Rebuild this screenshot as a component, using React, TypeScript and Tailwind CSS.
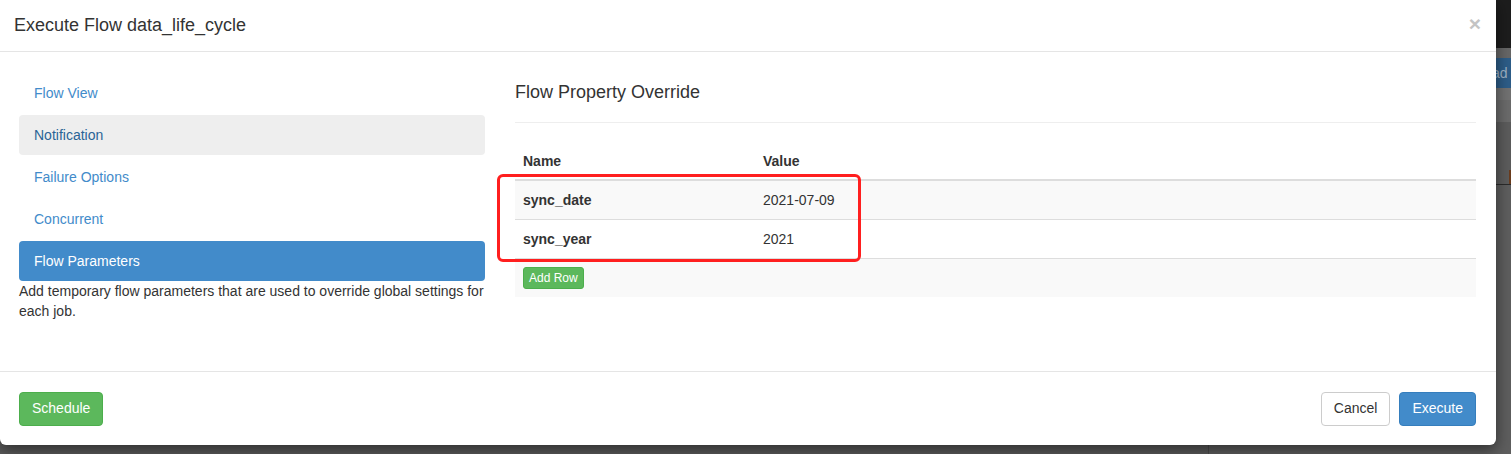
import React from "react";

const navItems = [
  { label: "Flow View", state: "link" },
  { label: "Notification", state: "hover" },
  { label: "Failure Options", state: "link" },
  { label: "Concurrent", state: "link" },
  { label: "Flow Parameters", state: "active" },
];

const params = [
  { name: "sync_date", value: "2021-07-09" },
  { name: "sync_year", value: "2021" },
];

function NavItem({ label, state }: { label: string; state: string }) {
  const tone =
    state === "active"
      ? "bg-[#428bca] text-white"
      : state === "hover"
        ? "bg-[#eeeeee] text-[#2a6496]"
        : "text-[#428bca]";
  return (
    <div className={`flex h-[40px] items-center rounded-[4px] px-[15px] text-[14px] ${tone}`}>{label}</div>
  );
}

function PageStrip() {
  // what shows of the page behind the dimmed backdrop
  return (
    <div className="flex w-[15px] shrink-0 flex-col">
      <div className="h-[48px] bg-[#1d1d1d]" />
      <div className="h-[10px] bg-[#676767]" />
      <div className="flex h-[30px] items-center overflow-hidden bg-[#2d5d88] text-[14px] leading-none text-[#9fb3c6]">
        <span className="-ml-[4px]">ad</span>
      </div>
      <div className="h-[12px] bg-[#727272]" />
      <div className="h-[22px] bg-[#6b6b6b]" />
      <div className="h-[48px] bg-[#5c5c5c]" />
      <div className="h-[14px] border-r-2 border-[#6b3c1e] bg-[#5c5c5c]" />
      <div className="h-[1px] bg-[#2b2b2b]" />
      <div className="flex-1 bg-[#5e5e5e]" />
    </div>
  );
}

export default function App() {
  return (
    <div
      className="flex h-[454px] w-[1511px] overflow-hidden bg-[#5c5c5c] text-[#333333]"
      style={{ fontFamily: '"Liberation Sans", Arial, sans-serif' }}
    >
      <div className="flex w-[1496px] shrink-0 flex-col">
        <div className="relative z-10 flex h-[445px] flex-col rounded-b-[6px] bg-white shadow-[0_5px_15px_rgba(0,0,0,0.5)]">
          {/* header */}
          <div className="flex h-[52px] items-center justify-between border-b border-[#e5e5e5] pl-[14px] pr-[15px]">
            <h4 className="text-[18px] leading-[21px] text-[#333333]">Execute Flow data_life_cycle</h4>
            <span className="-mt-[4px] text-[21px] font-bold leading-none text-[#c4c4c4]">×</span>
          </div>

          {/* body */}
          <div className="flex flex-1 gap-[30px] pl-[19px] pr-[20px] pt-[21px]">
            <div className="w-[466px] shrink-0">
              <div className="flex flex-col gap-[2px]">
                {navItems.map((n) => (
                  <NavItem key={n.label} label={n.label} state={n.state} />
                ))}
              </div>
              <p className="text-[14px] leading-[20px] text-[#333333]">
                Add temporary flow parameters that are used to override global settings for each job.
              </p>
            </div>

            <div className="relative flex-1">
              <h3 className="pt-[9px] text-[18px] leading-[20px] text-[#333333]">Flow Property Override</h3>
              <div className="mt-[20px] h-px bg-[#eeeeee]" />
              <div className="mt-[19px] text-[14px]">
                <div className="flex h-[39px] items-center border-b-2 border-[#dddddd] pt-[1px] font-bold">
                  <div className="w-[248px] pl-[8px]">Name</div>
                  <div>Value</div>
                </div>
                {params.map((p, i) => (
                  <div
                    key={p.name}
                    className={`flex items-center ${i === 0 ? "h-[38px] bg-[#f9f9f9]" : "h-[39px] border-t border-[#dddddd]"}`}
                  >
                    <div className="w-[248px] pl-[8px] font-bold">{p.name}</div>
                    <div>{p.value}</div>
                  </div>
                ))}
                <div className="flex h-[39px] items-center border-t border-[#dddddd] bg-[#f9f9f9] pl-[8px]">
                  <button className="flex h-[22px] items-center rounded-[3px] border border-[#4cae4c] bg-[#5cb85c] px-[5px] text-[12px] text-white">
                    Add Row
                  </button>
                </div>
              </div>

              {/* red annotation box */}
              <div className="pointer-events-none absolute left-[-18px] top-[101px] h-[88px] w-[364px] rounded-[6px] border-[3px] border-[#ff1f1f]" />
            </div>
          </div>

          {/* footer */}
          <div className="flex h-[74px] items-center justify-between border-t border-[#e5e5e5] pl-[19px] pr-[20px]">
            <button className="h-[34px] rounded-[4px] border border-[#4cae4c] bg-[#5cb85c] px-[12px] text-[14px] text-white">
              Schedule
            </button>
            <div className="flex gap-[9px]">
              <button className="h-[34px] rounded-[4px] border border-[#cccccc] bg-white px-[12px] text-[14px] text-[#333333]">
                Cancel
              </button>
              <button className="h-[34px] rounded-[4px] border border-[#357ebd] bg-[#428bca] px-[12px] text-[14px] text-white">
                Execute
              </button>
            </div>
          </div>
        </div>
        <div className="flex flex-1">
          <div className="w-[1208px] bg-[#5b5b5b]" />
          <div className="w-px bg-[#4a4a4a]" />
          <div className="flex-1 bg-[#5e5e5e]" />
        </div>
      </div>
      <PageStrip />
    </div>
  );
}
